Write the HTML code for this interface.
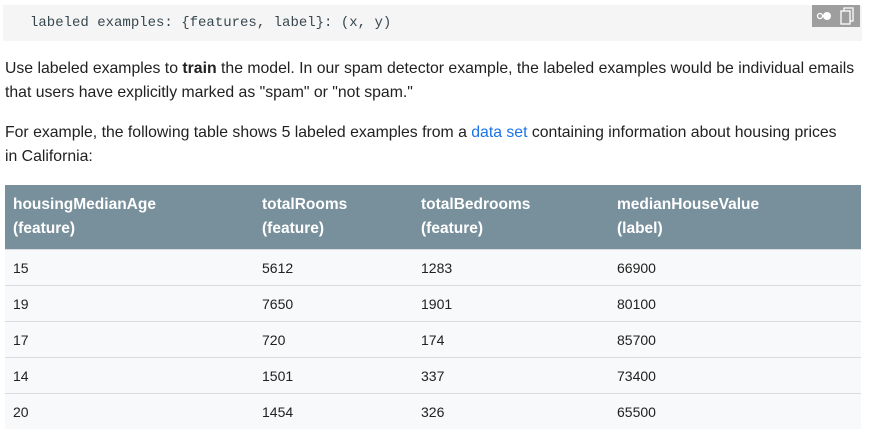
<!DOCTYPE html><html><head><style>
body{margin:0;background:#fff;font-family:"Liberation Sans",sans-serif;color:#212121;width:870px;height:428px;overflow:hidden;position:relative}
.code{position:absolute;left:3px;top:5px;width:859px;height:36px;background:#f5f5f5;font-family:"Liberation Mono",monospace;font-size:14px;color:#37474f;line-height:36px;padding-left:27px;box-sizing:border-box}
.ic{position:absolute;left:812px;top:5px;width:48px;height:22px;background:#9e9e9e}
p{position:absolute;left:5px;margin:0;font-size:15.8px;line-height:24px}
a{color:#1a73e8;text-decoration:none}
table{position:absolute;left:5px;top:185px;width:856px;border-collapse:collapse;font-size:14px}
th{background:#78909c;color:#fff;text-align:left;font-weight:bold;font-size:15.5px;line-height:24px;padding:8px 8px 8px;vertical-align:top}
td{background:#f8f9fa;height:35px;padding:0 8px;border-top:1px solid #dadce0}
</style></head><body>
<div class="code">labeled examples: {features, label}: (x, y)</div>
<div class="ic"><svg width="48" height="22"><circle cx="8" cy="11" r="2.5" fill="none" stroke="#fff" stroke-width="1.3"/><circle cx="15" cy="11" r="4" fill="#fff"/><rect x="29" y="6" width="9" height="13" fill="none" stroke="#fff" stroke-width="1.3"/><path d="M32 6V3h9v13h-3" fill="none" stroke="#fff" stroke-width="1.3"/></svg></div>
<p style="top:57px;width:864px">Use labeled examples to <b>train</b> the model. In our spam detector example, the labeled examples would be individual emails that users have explicitly marked as "spam" or "not spam."</p>
<p style="top:121px;width:845px">For example, the following table shows 5 labeled examples from a <a>data set</a> containing information about housing prices in California:</p>
<table>
<tr><th style="width:233px">housingMedianAge<br>(feature)</th><th style="width:143px">totalRooms<br>(feature)</th><th style="width:180px">totalBedrooms<br>(feature)</th><th>medianHouseValue<br>(label)</th></tr>
<tr><td>15</td><td>5612</td><td>1283</td><td>66900</td></tr>
<tr><td>19</td><td>7650</td><td>1901</td><td>80100</td></tr>
<tr><td>17</td><td>720</td><td>174</td><td>85700</td></tr>
<tr><td>14</td><td>1501</td><td>337</td><td>73400</td></tr>
<tr><td>20</td><td>1454</td><td>326</td><td>65500</td></tr>
</table>
</body></html>
